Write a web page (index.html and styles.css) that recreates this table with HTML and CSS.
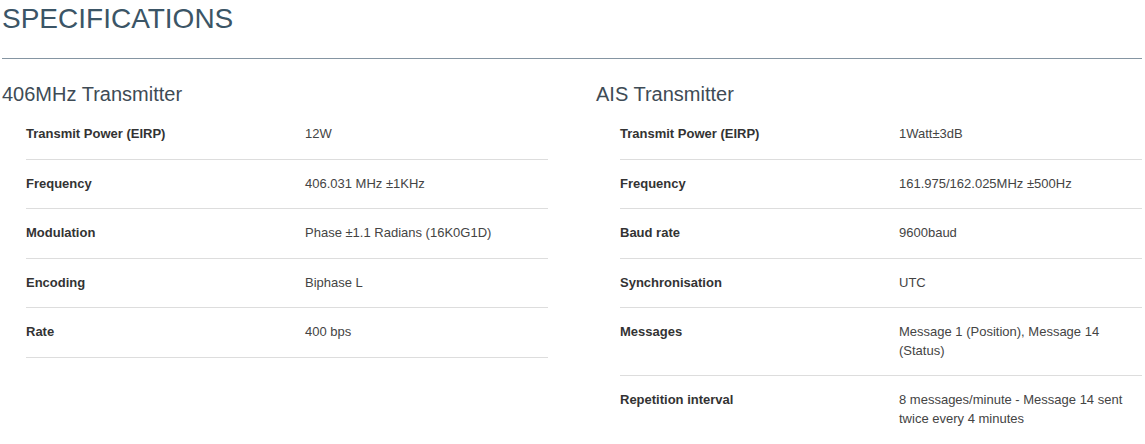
FILE: index.html
```html
<!DOCTYPE html>
<html>
<head>
<meta charset="utf-8">
<link rel="stylesheet" href="styles.css">
</head>
<body>
<div class="container">
  <h1 class="title">SPECIFICATIONS</h1>
  <hr class="rule">
  <div class="cols">
    <section class="col">
      <h2 class="sub">406MHz Transmitter</h2>
      <table class="spec">
        <tr><td class="lbl">Transmit Power (EIRP)</td><td class="val">12W</td></tr>
        <tr><td class="lbl">Frequency</td><td class="val">406.031 MHz ±1KHz</td></tr>
        <tr><td class="lbl">Modulation</td><td class="val">Phase ±1.1 Radians (16K0G1D)</td></tr>
        <tr><td class="lbl">Encoding</td><td class="val">Biphase L</td></tr>
        <tr><td class="lbl">Rate</td><td class="val">400 bps</td></tr>
      </table>
    </section>
    <section class="col">
      <h2 class="sub">AIS Transmitter</h2>
      <table class="spec">
        <tr><td class="lbl">Transmit Power (EIRP)</td><td class="val">1Watt±3dB</td></tr>
        <tr><td class="lbl">Frequency</td><td class="val">161.975/162.025MHz ±500Hz</td></tr>
        <tr><td class="lbl">Baud rate</td><td class="val">9600baud</td></tr>
        <tr><td class="lbl">Synchronisation</td><td class="val">UTC</td></tr>
        <tr><td class="lbl">Messages</td><td class="val">Message 1 (Position), Message 14 (Status)</td></tr>
        <tr><td class="lbl">Repetition interval</td><td class="val">8 messages/minute - Message 14 sent twice every 4 minutes</td></tr>
      </table>
    </section>
  </div>
</div>
</body>
</html>
```
FILE: styles.css
```css
html, body {
  margin: 0;
  padding: 0;
  background: #ffffff;
}
body {
  font-family: "Liberation Sans", Arial, sans-serif;
  color: #333333;
  font-size: 13px;
  line-height: 1.42857;
}
.container {
  width: 1140px;
  padding-left: 2px;
}
.title {
  margin: 3px 0 24px 0;
  font-size: 28px;
  line-height: 31px;
  font-weight: normal;
  color: #3b5566;
}
.rule {
  margin: 0;
  border: 0;
  border-top: 1px solid #8595a2;
  height: 0;
}
.cols {
  display: grid;
  grid-template-columns: 546px 546px;
  column-gap: 48px;
}
.sub {
  margin: 24px 0 5px 0;
  font-size: 20px;
  line-height: 22px;
  font-weight: normal;
  color: #3e4b55;
}
.spec {
  margin-left: 24px;
  width: 522px;
  border-collapse: collapse;
}
.spec td {
  padding: 15px 0;
  border-bottom: 1px solid #dddddd;
  vertical-align: top;
  line-height: 18.57px;
}
.lbl {
  width: 279px;
  font-weight: bold;
  color: #333333;
}
.val {
  padding-right: 12px !important;
  color: #444444;
}
```
